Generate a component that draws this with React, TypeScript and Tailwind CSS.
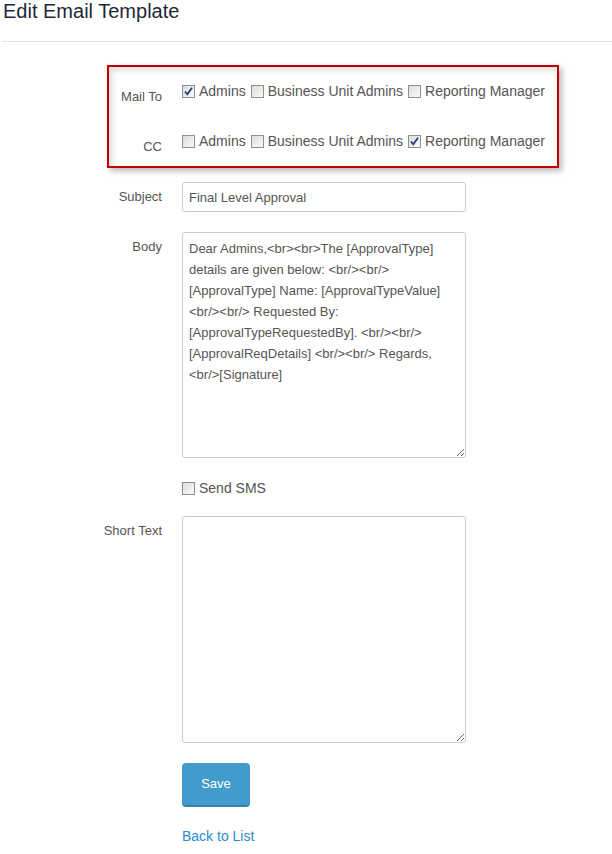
import React from 'react'

const BODY =
  'Dear Admins,<br><br>The [ApprovalType] details are given below: <br/><br/> [ApprovalType] Name: [ApprovalTypeValue] <br/><br/> Requested By: [ApprovalTypeRequestedBy]. <br/><br/> [ApprovalReqDetails] <br/><br/> Regards, <br/>[Signature]'

function Box({ checked }: { checked?: boolean }) {
  return (
    <span className="inline-flex h-[13px] w-[13px] shrink-0 items-center justify-center border border-[#8e8f8f] bg-gradient-to-br from-[#dcdcdc] to-[#fbfbfb]">
      {checked && (
        <svg width="11" height="11" viewBox="0 0 11 11">
          <path d="M2 5.5 L4.3 8.3 L9 1.8" fill="none" stroke="#243c7a" strokeWidth="1.8" />
        </svg>
      )}
    </span>
  )
}

function Check({ label, checked }: { label: string; checked?: boolean }) {
  return (
    <span className="mr-[5px] inline-flex items-center">
      <Box checked={checked} />
      <span className="ml-1 text-[14px] text-[#555]">{label}</span>
    </span>
  )
}

function CheckRow({ label, sel }: { label: string; sel: number }) {
  return (
    <div className="flex">
      <div className="w-[53px] pt-[6px] text-right text-[13px] leading-5 text-[#555]">{label}</div>
      <div className="ml-5 flex h-5 items-center">
        <Check label="Admins" checked={sel === 0} />
        <Check label="Business Unit Admins" checked={sel === 1} />
        <Check label="Reporting Manager" checked={sel === 2} />
      </div>
    </div>
  )
}

const area =
  'w-[284px] resize-y rounded-[3px] border border-[#ccc] px-[6px] py-[5px] text-[13px] leading-[21px] text-[#555] outline-none'

export default function App() {
  return (
    <div className="min-h-[854px] bg-white font-['Liberation_Sans',Arial,sans-serif]">
      <h1 className="pl-[3px] text-[20px] leading-[22px] text-[#1c2839]">Edit Email Template</h1>
      <div className="ml-[2px] mt-[19px] h-px bg-[#e5e5e5]" />

      <div className="ml-[107px] mt-[23px] w-[452px] border-2 border-[#c00000] pb-[9px] pt-[14px] shadow-[3px_3px_6px_rgba(0,0,0,0.28),inset_3px_3px_6px_rgba(0,0,0,0.14)]">
        <CheckRow label="Mail To" sel={0} />
        <div className="h-6" />
        <CheckRow label="CC" sel={2} />
      </div>

      <div className="mt-[14px] flex items-center">
        <div className="w-[162px] text-right text-[13px] text-[#555]">Subject</div>
        <input
          defaultValue="Final Level Approval"
          className="ml-5 h-[30px] w-[284px] rounded-[3px] border border-[#ccc] px-[6px] text-[13px] text-[#555] outline-none"
        />
      </div>

      <div className="mt-5 flex items-start">
        <div className="w-[162px] pt-[5px] text-right text-[13px] leading-5 text-[#555]">Body</div>
        <textarea defaultValue={BODY} className={`ml-5 h-[226px] ${area}`} />
      </div>

      <div className="ml-[182px] mt-[20px] flex h-5 items-center">
        <Box />
        <span className="ml-1 text-[14px] text-[#555]">Send SMS</span>
      </div>

      <div className="mt-[18px] flex items-start">
        <div className="w-[162px] pt-[5px] text-right text-[13px] leading-5 text-[#555]">Short Text</div>
        <textarea className={`ml-5 h-[227px] ${area}`} />
      </div>

      <button className="ml-[182px] mt-5 h-[44px] w-[68px] rounded-[4px] border-b-2 border-[#357faf] bg-[#419bcd] text-[13px] text-white">
        Save
      </button>

      <div className="ml-[182px] mt-[17px]">
        <a href="#" className="text-[14px] leading-5 text-[#2b8bd3]">Back to List</a>
      </div>
    </div>
  )
}
